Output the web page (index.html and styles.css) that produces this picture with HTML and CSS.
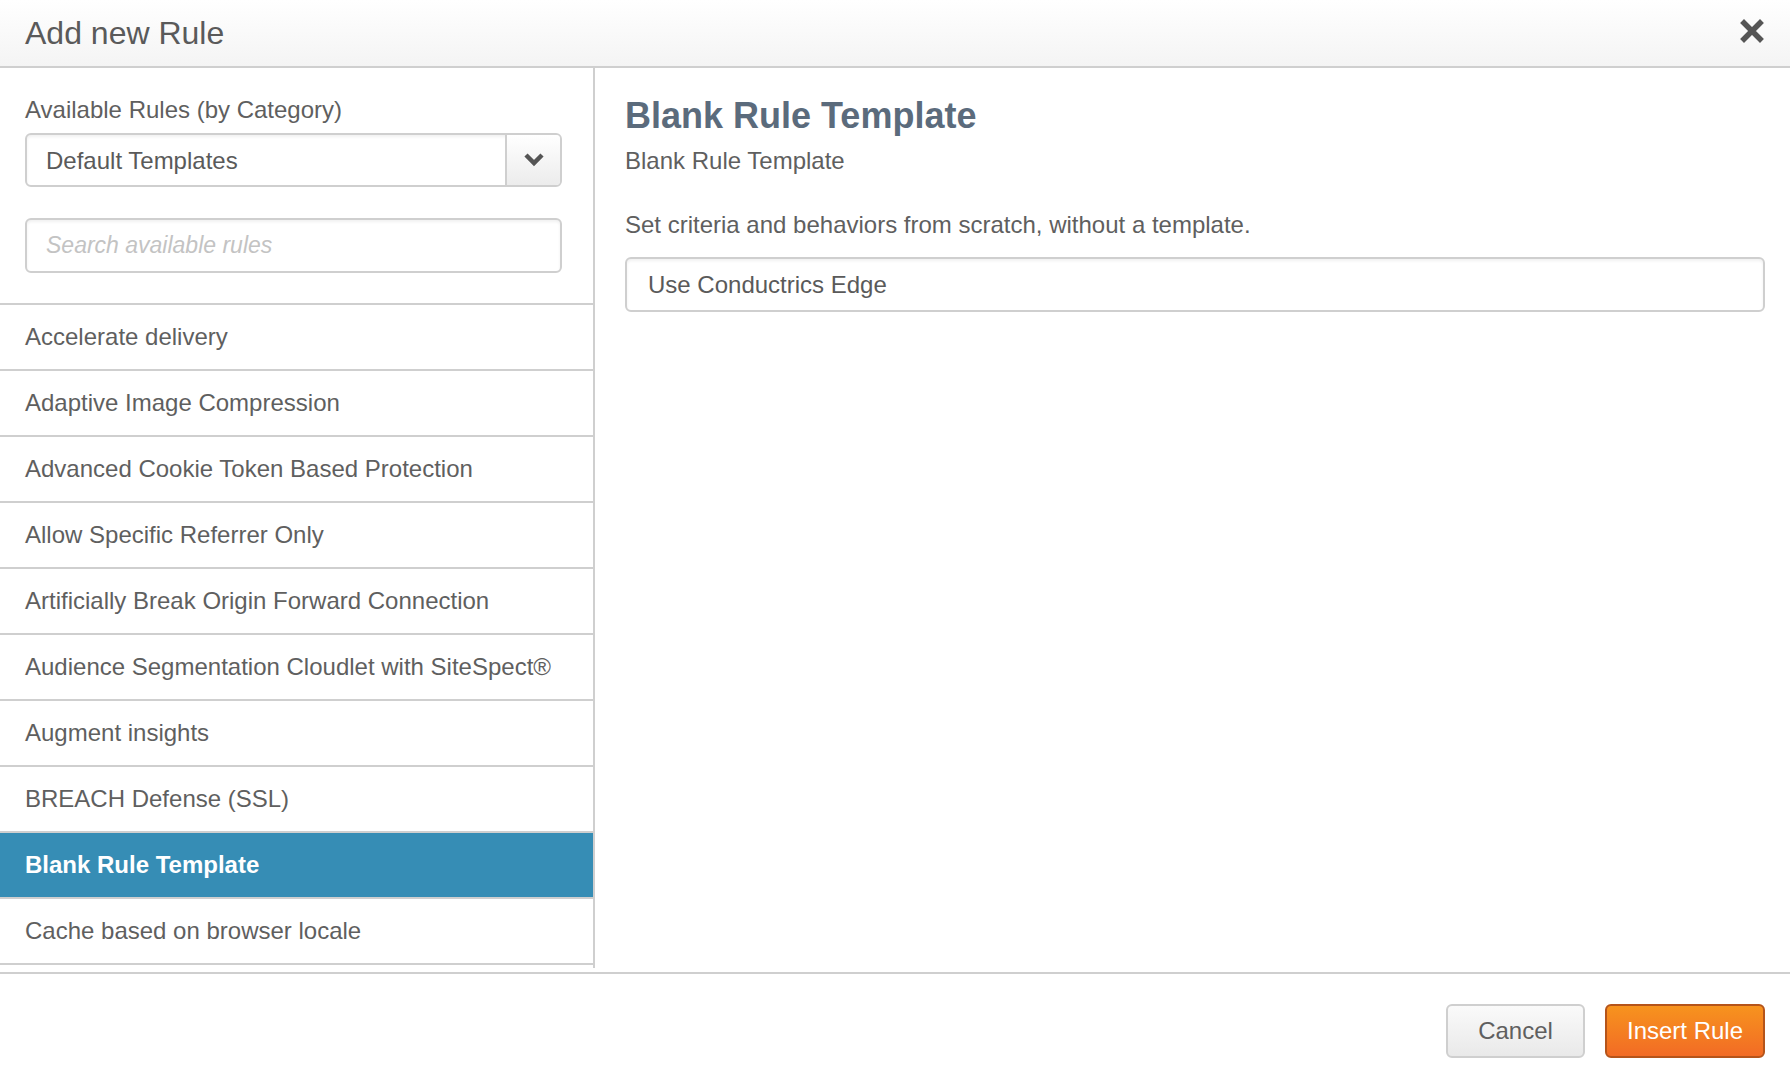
FILE: index.html
```html
<!DOCTYPE html>
<html lang="en">
<head>
<meta charset="utf-8">
<title>Add new Rule</title>
<link rel="stylesheet" href="styles.css">
</head>
<body>
<div class="modal">
  <header class="modal-header">
    <h1 class="modal-title">Add new Rule</h1>
    <button class="close" aria-label="Close">
      <svg width="24" height="24" viewBox="0 0 24 24"><path d="M4 4 L20 20 M20 4 L4 20" stroke="#555" stroke-width="5.5" stroke-linecap="square"/></svg>
    </button>
  </header>
  <div class="modal-body">
    <aside class="sidebar">
      <div class="filters">
        <label class="field-label">Available Rules (by Category)</label>
        <div class="select">
          <span class="select-value">Default Templates</span>
          <span class="select-btn">
            <svg width="22" height="16" viewBox="0 0 22 16"><path d="M3 4 L11 12 L19 4" fill="none" stroke="#555" stroke-width="4.5"/></svg>
          </span>
        </div>
        <div class="search">Search available rules</div>
      </div>
      <ul class="rule-list">
        <li class="rule">Accelerate delivery</li>
        <li class="rule">Adaptive Image Compression</li>
        <li class="rule">Advanced Cookie Token Based Protection</li>
        <li class="rule">Allow Specific Referrer Only</li>
        <li class="rule">Artificially Break Origin Forward Connection</li>
        <li class="rule">Audience Segmentation Cloudlet with SiteSpect®</li>
        <li class="rule">Augment insights</li>
        <li class="rule">BREACH Defense (SSL)</li>
        <li class="rule rule-active">Blank Rule Template</li>
        <li class="rule">Cache based on browser locale</li>
      </ul>
    </aside>
    <section class="detail">
      <h2 class="detail-title">Blank Rule Template</h2>
      <p class="detail-sub">Blank Rule Template</p>
      <p class="detail-desc">Set criteria and behaviors from scratch, without a template.</p>
      <div class="text-input">Use Conductrics Edge</div>
    </section>
  </div>
  <footer class="modal-footer">
    <button class="btn btn-cancel">Cancel</button>
    <button class="btn btn-primary">Insert Rule</button>
  </footer>
</div>
</body>
</html>
```
FILE: styles.css
```css
* { box-sizing: border-box; }
html, body { margin: 0; padding: 0; background: #fff; }
body {
  font-family: "Liberation Sans", Arial, Helvetica, sans-serif;
  color: #5f5f5f;
  width: 1790px;
  height: 1086px;
  overflow: hidden;
}
.modal { display: flex; flex-direction: column; height: 1086px; }
.modal-header {
  height: 68px;
  border-bottom: 2px solid #cfcfcf;
  background: linear-gradient(#ffffff, #f4f4f4);
  display: flex;
  align-items: center;
  justify-content: space-between;
  padding: 0 26px 0 25px;
}
.modal-title {
  margin: 0;
  font-size: 32px;
  font-weight: normal;
  color: #5a5a5a;
  line-height: 40px;
}
.close {
  border: 0; background: none; padding: 0; margin: 0;
  width: 24px; height: 24px;
  display: flex;
  margin-bottom: 4px;
}
.modal-body { display: flex; height: 900px; }
.sidebar {
  width: 595px;
  border-right: 2px solid #cfcfcf;
  display: flex;
  flex-direction: column;
  overflow: hidden;
}
.filters {
  padding: 24px 31px 30px 25px;
  border-bottom: 2px solid #cfcfcf;
}
.field-label {
  display: block;
  font-size: 24px;
  line-height: 36px;
  color: #5f5f5f;
  margin-bottom: 5px;
}
.select {
  height: 54px;
  border: 2px solid #cfcfcf;
  border-radius: 6px;
  display: flex;
  align-items: stretch;
  box-shadow: inset 0 2px 3px rgba(0,0,0,0.06);
  overflow: hidden;
}
.select-value {
  flex: 1;
  display: flex;
  align-items: center;
  padding-left: 19px;
  padding-top: 2px;
  font-size: 24px;
  color: #5a5a5a;
}
.select-btn {
  width: 55px;
  border-left: 2px solid #cfcfcf;
  background: linear-gradient(#ffffff, #ececec);
  display: flex;
  align-items: center;
  justify-content: center;
  padding-bottom: 2px;
}
.search {
  margin-top: 31px;
  height: 55px;
  border: 2px solid #cfcfcf;
  border-radius: 6px;
  box-shadow: inset 0 2px 3px rgba(0,0,0,0.06);
  display: flex;
  align-items: center;
  padding-left: 19px;
  font-size: 23px;
  font-style: italic;
  color: #c3c3c3;
}
.rule-list { list-style: none; margin: 0; padding: 0; }
.rule {
  height: 66px;
  border-bottom: 2px solid #cfcfcf;
  padding: 0 25px;
  display: flex;
  align-items: center;
  font-size: 24px;
  color: #5f5f5f;
  white-space: nowrap;
}
.rule-active {
  background: #368db5;
  color: #fff;
  font-weight: bold;
}
.detail { flex: 1; padding: 26px 25px 0 30px; }
.detail-title {
  margin: 0;
  font-size: 36px;
  line-height: 44px;
  font-weight: bold;
  color: #5b6b7c;
}
.detail-sub {
  margin: 5px 0 0;
  font-size: 24px;
  line-height: 36px;
  color: #5f5f5f;
}
.detail-desc {
  margin: 28px 0 0;
  font-size: 24px;
  line-height: 36px;
  color: #5f5f5f;
}
.text-input {
  margin-top: 14px;
  height: 55px;
  border: 2px solid #cfcfcf;
  border-radius: 6px;
  box-shadow: inset 0 2px 3px rgba(0,0,0,0.06);
  display: flex;
  align-items: center;
  padding-left: 21px;
  font-size: 24px;
  color: #5a5a5a;
}
.modal-footer {
  margin-top: 4px;
  border-top: 2px solid #cfcfcf;
  flex: 1;
  display: flex;
  justify-content: flex-end;
  align-items: flex-start;
  padding: 30px 25px 0 0;
  gap: 20px;
}
.btn {
  height: 54px;
  border-radius: 6px;
  font-family: "Liberation Sans", Arial, Helvetica, sans-serif;
  font-size: 24px;
  padding: 0;
  cursor: pointer;
}
.btn-cancel {
  width: 139px;
  border: 2px solid #cfcfcf;
  background: linear-gradient(#fafafa, #e9e9e9);
  color: #5f5f5f;
}
.btn-primary {
  width: 160px;
  border: 2px solid #b5541a;
  background: linear-gradient(#f7931e, #f26b25);
  color: #fff;
}
```
